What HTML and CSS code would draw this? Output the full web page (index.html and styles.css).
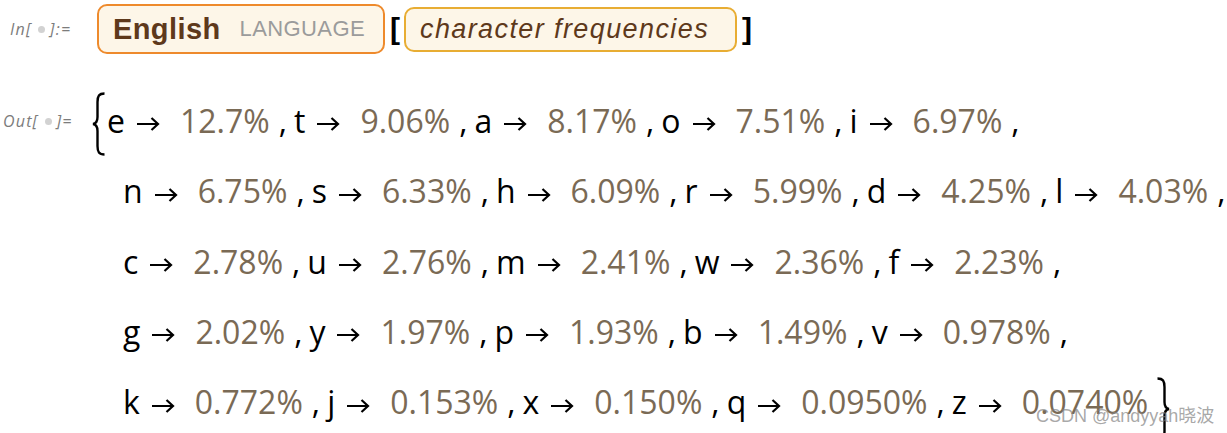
FILE: index.html
```html
<!DOCTYPE html>
<html>
<head>
<meta charset="utf-8">
<link rel="stylesheet" href="styles.css">
</head>
<body>
<div class="nb">
  <div class="cell in-cell">
    <div class="label in-label">In[<span class="dot"></span>]:=</div>
    <div class="input">
      <div class="box lang"><span class="eng">English</span><span class="tag">LANGUAGE</span></div>
      <span class="brk">[</span>
      <div class="box prop"><span class="propname">character frequencies</span></div>
      <span class="brk">]</span>
    </div>
  </div>
  <div class="cell out-cell">
    <div class="label out-label">Out[<span class="dot"></span>]=</div>
    <div class="result">
      <div class="line first"><svg class="brace" width="14" height="64" viewBox="0 0 14 64"><path d="M12.5 1.5 C7 1.5 5.5 4 5.5 10 L5.5 25 C5.5 29.5 4 31.5 1 32 C4 32.5 5.5 34.5 5.5 39 L5.5 54 C5.5 60 7 62.5 12.5 62.5" fill="none" stroke="#000" stroke-width="2.4"/></svg><span class="k">e</span><svg class="ar" width="24" height="14" viewBox="0 0 24 14"><path d="M1 7 H22 M15.5 1 L22 7 L15.5 13" fill="none" stroke="#000" stroke-width="2.2"/></svg><span class="v">12.7%</span><span class="c">,</span><span class="k">t</span><svg class="ar" width="24" height="14" viewBox="0 0 24 14"><path d="M1 7 H22 M15.5 1 L22 7 L15.5 13" fill="none" stroke="#000" stroke-width="2.2"/></svg><span class="v">9.06%</span><span class="c">,</span><span class="k">a</span><svg class="ar" width="24" height="14" viewBox="0 0 24 14"><path d="M1 7 H22 M15.5 1 L22 7 L15.5 13" fill="none" stroke="#000" stroke-width="2.2"/></svg><span class="v">8.17%</span><span class="c">,</span><span class="k">o</span><svg class="ar" width="24" height="14" viewBox="0 0 24 14"><path d="M1 7 H22 M15.5 1 L22 7 L15.5 13" fill="none" stroke="#000" stroke-width="2.2"/></svg><span class="v">7.51%</span><span class="c">,</span><span class="k">i</span><svg class="ar" width="24" height="14" viewBox="0 0 24 14"><path d="M1 7 H22 M15.5 1 L22 7 L15.5 13" fill="none" stroke="#000" stroke-width="2.2"/></svg><span class="v">6.97%</span><span class="c">,</span></div>
      <div class="line"><span class="k">n</span><svg class="ar" width="24" height="14" viewBox="0 0 24 14"><path d="M1 7 H22 M15.5 1 L22 7 L15.5 13" fill="none" stroke="#000" stroke-width="2.2"/></svg><span class="v">6.75%</span><span class="c">,</span><span class="k">s</span><svg class="ar" width="24" height="14" viewBox="0 0 24 14"><path d="M1 7 H22 M15.5 1 L22 7 L15.5 13" fill="none" stroke="#000" stroke-width="2.2"/></svg><span class="v">6.33%</span><span class="c">,</span><span class="k">h</span><svg class="ar" width="24" height="14" viewBox="0 0 24 14"><path d="M1 7 H22 M15.5 1 L22 7 L15.5 13" fill="none" stroke="#000" stroke-width="2.2"/></svg><span class="v">6.09%</span><span class="c">,</span><span class="k">r</span><svg class="ar" width="24" height="14" viewBox="0 0 24 14"><path d="M1 7 H22 M15.5 1 L22 7 L15.5 13" fill="none" stroke="#000" stroke-width="2.2"/></svg><span class="v">5.99%</span><span class="c">,</span><span class="k">d</span><svg class="ar" width="24" height="14" viewBox="0 0 24 14"><path d="M1 7 H22 M15.5 1 L22 7 L15.5 13" fill="none" stroke="#000" stroke-width="2.2"/></svg><span class="v">4.25%</span><span class="c">,</span><span class="k">l</span><svg class="ar" width="24" height="14" viewBox="0 0 24 14"><path d="M1 7 H22 M15.5 1 L22 7 L15.5 13" fill="none" stroke="#000" stroke-width="2.2"/></svg><span class="v">4.03%</span><span class="c">,</span></div>
      <div class="line"><span class="k">c</span><svg class="ar" width="24" height="14" viewBox="0 0 24 14"><path d="M1 7 H22 M15.5 1 L22 7 L15.5 13" fill="none" stroke="#000" stroke-width="2.2"/></svg><span class="v">2.78%</span><span class="c">,</span><span class="k">u</span><svg class="ar" width="24" height="14" viewBox="0 0 24 14"><path d="M1 7 H22 M15.5 1 L22 7 L15.5 13" fill="none" stroke="#000" stroke-width="2.2"/></svg><span class="v">2.76%</span><span class="c">,</span><span class="k">m</span><svg class="ar" width="24" height="14" viewBox="0 0 24 14"><path d="M1 7 H22 M15.5 1 L22 7 L15.5 13" fill="none" stroke="#000" stroke-width="2.2"/></svg><span class="v">2.41%</span><span class="c">,</span><span class="k">w</span><svg class="ar" width="24" height="14" viewBox="0 0 24 14"><path d="M1 7 H22 M15.5 1 L22 7 L15.5 13" fill="none" stroke="#000" stroke-width="2.2"/></svg><span class="v">2.36%</span><span class="c">,</span><span class="k">f</span><svg class="ar" width="24" height="14" viewBox="0 0 24 14"><path d="M1 7 H22 M15.5 1 L22 7 L15.5 13" fill="none" stroke="#000" stroke-width="2.2"/></svg><span class="v">2.23%</span><span class="c">,</span></div>
      <div class="line"><span class="k">g</span><svg class="ar" width="24" height="14" viewBox="0 0 24 14"><path d="M1 7 H22 M15.5 1 L22 7 L15.5 13" fill="none" stroke="#000" stroke-width="2.2"/></svg><span class="v">2.02%</span><span class="c">,</span><span class="k">y</span><svg class="ar" width="24" height="14" viewBox="0 0 24 14"><path d="M1 7 H22 M15.5 1 L22 7 L15.5 13" fill="none" stroke="#000" stroke-width="2.2"/></svg><span class="v">1.97%</span><span class="c">,</span><span class="k">p</span><svg class="ar" width="24" height="14" viewBox="0 0 24 14"><path d="M1 7 H22 M15.5 1 L22 7 L15.5 13" fill="none" stroke="#000" stroke-width="2.2"/></svg><span class="v">1.93%</span><span class="c">,</span><span class="k">b</span><svg class="ar" width="24" height="14" viewBox="0 0 24 14"><path d="M1 7 H22 M15.5 1 L22 7 L15.5 13" fill="none" stroke="#000" stroke-width="2.2"/></svg><span class="v">1.49%</span><span class="c">,</span><span class="k">v</span><svg class="ar" width="24" height="14" viewBox="0 0 24 14"><path d="M1 7 H22 M15.5 1 L22 7 L15.5 13" fill="none" stroke="#000" stroke-width="2.2"/></svg><span class="v">0.978%</span><span class="c">,</span></div>
      <div class="line"><span class="k">k</span><svg class="ar" width="24" height="14" viewBox="0 0 24 14"><path d="M1 7 H22 M15.5 1 L22 7 L15.5 13" fill="none" stroke="#000" stroke-width="2.2"/></svg><span class="v">0.772%</span><span class="c">,</span><span class="k">j</span><svg class="ar" width="24" height="14" viewBox="0 0 24 14"><path d="M1 7 H22 M15.5 1 L22 7 L15.5 13" fill="none" stroke="#000" stroke-width="2.2"/></svg><span class="v">0.153%</span><span class="c">,</span><span class="k">x</span><svg class="ar" width="24" height="14" viewBox="0 0 24 14"><path d="M1 7 H22 M15.5 1 L22 7 L15.5 13" fill="none" stroke="#000" stroke-width="2.2"/></svg><span class="v">0.150%</span><span class="c">,</span><span class="k">q</span><svg class="ar" width="24" height="14" viewBox="0 0 24 14"><path d="M1 7 H22 M15.5 1 L22 7 L15.5 13" fill="none" stroke="#000" stroke-width="2.2"/></svg><span class="v">0.0950%</span><span class="c">,</span><span class="k">z</span><svg class="ar" width="24" height="14" viewBox="0 0 24 14"><path d="M1 7 H22 M15.5 1 L22 7 L15.5 13" fill="none" stroke="#000" stroke-width="2.2"/></svg><span class="v">0.0740%</span><svg class="brace close" width="14" height="64" viewBox="0 0 14 64"><path d="M1.5 1.5 C7 1.5 8.5 4 8.5 10 L8.5 25 C8.5 29.5 10 31.5 13 32 C10 32.5 8.5 34.5 8.5 39 L8.5 54 C8.5 60 7 62.5 1.5 62.5" fill="none" stroke="#000" stroke-width="2.4"/></svg></div>
    </div>
  </div>
  <div class="watermark">CSDN @andyyah晓波</div>
</div>
</body>
</html>
```

FILE: styles.css
```css
html, body {
  margin: 0;
  padding: 0;
  background: #ffffff;
}

.nb {
  position: relative;
  width: 1227px;
  height: 433px;
  overflow: hidden;
}

.cell {
  display: flex;
  align-items: flex-start;
}

.label {
  flex: none;
  font-family: "Open Sans", "Liberation Sans", sans-serif;
  font-style: italic;
  font-size: 16px;
  letter-spacing: 1.2px;
  color: #7c7c7c;
  white-space: nowrap;
  display: flex;
  align-items: center;
}

.dot {
  display: inline-block;
  width: 7px;
  height: 7px;
  border-radius: 50%;
  background: #d2d2d2;
  margin: 0 5px 0 6px;
}

.in-cell {
  padding-top: 4px;
}

.in-label {
  width: 97px;
  padding-left: 10px;
  box-sizing: border-box;
  height: 50px;
}

.input {
  display: flex;
  align-items: center;
}

.box {
  box-sizing: border-box;
  border-radius: 10px;
  background: #fdf6e8;
  display: flex;
  align-items: center;
  font-family: "Liberation Sans", Arial, sans-serif;
}

.lang {
  width: 288px;
  height: 50px;
  border: 2px solid #ee8a2c;
  padding-left: 14px;
}

.eng {
  font-weight: bold;
  font-size: 29px;
  color: #5e391b;
  letter-spacing: 0.4px;
}

.tag {
  font-size: 22px;
  color: #9b9b9b;
  margin-left: 19px;
  letter-spacing: 0.4px;
}

.brk {
  font-family: "Liberation Sans", Arial, sans-serif;
  font-weight: bold;
  font-size: 30px;
  color: #000;
  margin: 0 4px 0 5px;
}

.prop {
  width: 333px;
  height: 45px;
  border: 2px solid #e8ad33;
  padding-left: 14px;
}

.propname {
  font-style: italic;
  font-size: 27px;
  color: #5e391b;
  letter-spacing: 1.4px;
}

.out-cell {
  margin-top: 32px;
}

.out-label {
  width: 92px;
  padding-left: 3px;
  box-sizing: border-box;
  height: 70px;
}

.result {
  font-family: "Open Sans", "Noto Sans", sans-serif;
  font-size: 32px;
  color: #000;
}

.line {
  height: 70.3px;
  line-height: 70.3px;
  padding-left: 31px;
  white-space: nowrap;
}

.line.first {
  padding-left: 0;
}

.brace {
  vertical-align: middle;
  margin-right: 1px;
}

.brace.close {
  margin-left: 8px;
  vertical-align: -27px;
}

.ar {
  vertical-align: middle;
  margin: 0 20px 0 11px;
}

.v {
  color: #7a6a55;
}

.c {
  margin: 0 7px 0 9px;
}

.watermark {
  position: absolute;
  left: 1036px;
  top: 401px;
  font-family: "Liberation Sans", "Noto Sans CJK SC", sans-serif;
  font-size: 18px;
  color: rgba(130, 130, 130, 0.7);
  white-space: nowrap;
}
```
